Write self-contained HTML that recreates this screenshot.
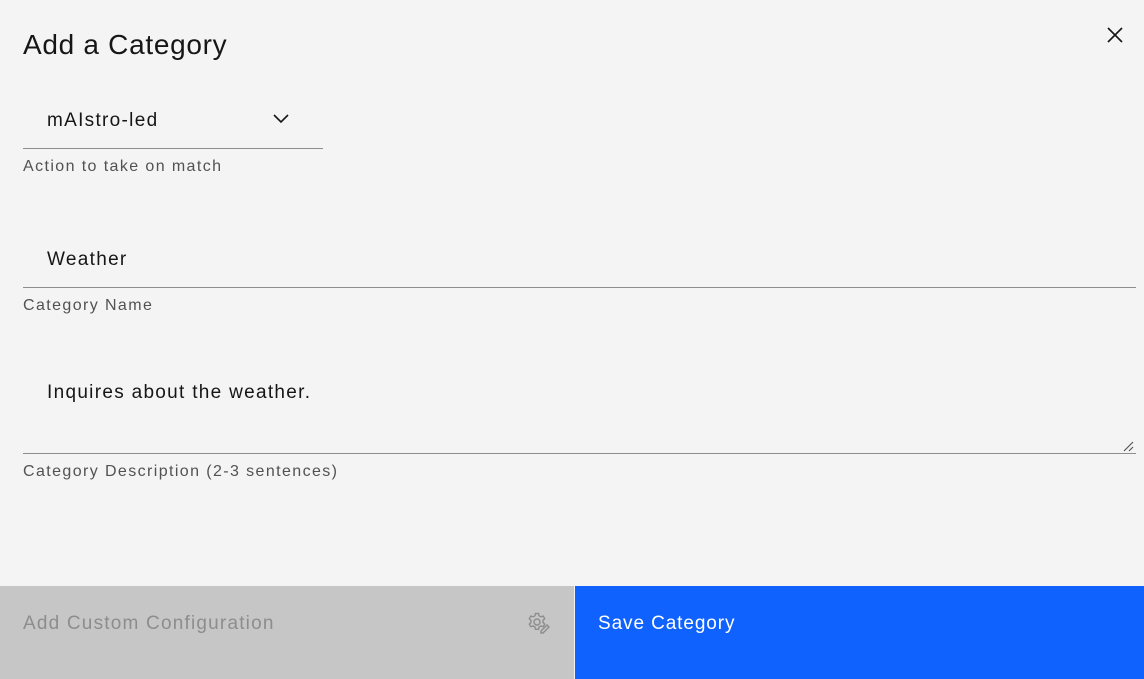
<!DOCTYPE html>
<html><head><style>
*{margin:0;padding:0;box-sizing:border-box}
body{width:1144px;height:679px;background:#f4f4f4;font-family:"Liberation Sans",sans-serif;color:#161616;position:relative;overflow:hidden}
.a{position:absolute;white-space:nowrap}
.lbl{font-size:16px;color:#525252;letter-spacing:1.4px}
.val{font-size:19px;letter-spacing:1.3px}
.line{position:absolute;height:1px;background:#8d8d8d}
</style></head><body>
<div class="a" style="left:23px;top:29px;font-size:28px;letter-spacing:0.7px">Add a Category</div>
<svg class="a" style="left:1106px;top:26px" width="18" height="18" viewBox="0 0 18 18"><path d="M2 2L16 16M16 2L2 16" stroke="#161616" stroke-width="1.6"/></svg>
<div class="a val" style="left:47px;top:110px">mAIstro-led</div>
<svg class="a" style="left:273px;top:114px" width="16" height="10" viewBox="0 0 16 10"><path d="M1 1L8 8L15 1" stroke="#161616" stroke-width="1.6" fill="none"/></svg>
<div class="line" style="left:23px;top:148px;width:300px"></div>
<div class="a lbl" style="left:23px;top:158px">Action to take on match</div>
<div class="a val" style="left:47px;top:249px">Weather</div>
<div class="line" style="left:23px;top:287px;width:1113px"></div>
<div class="a lbl" style="left:23px;top:297px">Category Name</div>
<div class="a val" style="left:47px;top:382px">Inquires about the weather.</div>
<svg class="a" style="left:1122px;top:440px" width="12" height="12" viewBox="0 0 12 12"><path d="M11 2L2 11M11 7L7 11" stroke="#555" stroke-width="1.2"/></svg>
<div class="line" style="left:23px;top:453px;width:1113px"></div>
<div class="a lbl" style="left:23px;top:463px">Category Description (2-3 sentences)</div>
<div class="a" style="left:0;top:586px;width:574px;height:93px;background:#c6c6c6"></div>
<div class="a" style="left:23px;top:613px;font-size:19px;color:#8d8d8d;letter-spacing:1.2px">Add Custom Configuration</div>
<svg class="a" style="left:527px;top:611px" width="24" height="24" viewBox="0 0 24 24" fill="none" stroke="#8d8d8d" stroke-width="1.4"><circle cx="10" cy="11" r="3"/><path d="M8.5 2.5h3l.6 2.3 1.8 1 2.3-.7 1.5 2.6-1.7 1.7v2l1.7 1.7-1.5 2.6-2.3-.7-1.8 1-.6 2.3h-3l-.6-2.3-1.8-1-2.3.7-1.5-2.6 1.7-1.7v-2L2.3 7.7l1.5-2.6 2.3.7 1.8-1z"/><path d="M14 20l6-6 2 2-6 6h-2z" fill="#c6c6c6"/></svg>
<div class="a" style="left:575px;top:586px;width:569px;height:93px;background:#0f62fe"></div>
<div class="a" style="left:598px;top:613px;font-size:19px;color:#fff;letter-spacing:0.9px">Save Category</div>
</body></html>
